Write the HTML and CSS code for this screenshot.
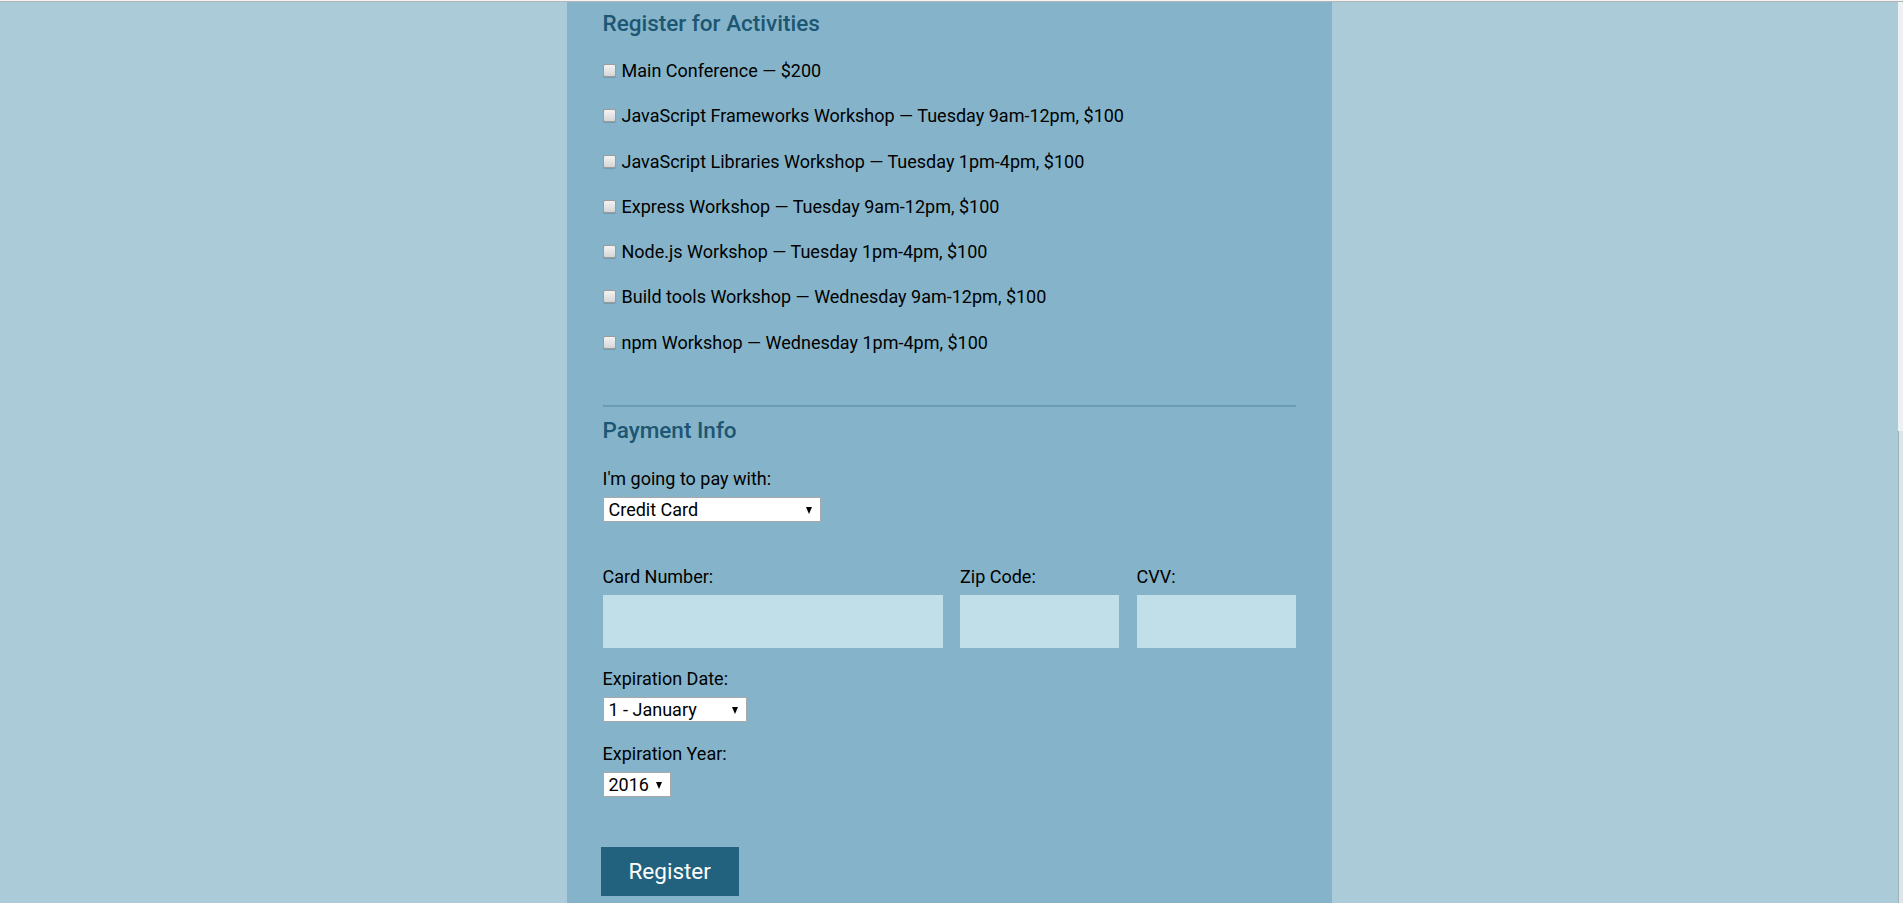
FILE: index.html
```html
<!DOCTYPE html>
<html lang="en">
<head>
<meta charset="utf-8">
<title>Register</title>
<link rel="stylesheet" href="styles.css">
</head>
<body>
<div class="topline"></div>
<div class="frame">
  <div class="page">
    <form class="container">
      <section class="activities">
        <h2 class="legend">Register for Activities</h2>
        <div class="activity-list">
          <label class="activity"><input type="checkbox" class="check">Main Conference — $200</label>
          <label class="activity"><input type="checkbox" class="check">JavaScript Frameworks Workshop — Tuesday 9am-12pm, $100</label>
          <label class="activity"><input type="checkbox" class="check">JavaScript Libraries Workshop — Tuesday 1pm-4pm, $100</label>
          <label class="activity"><input type="checkbox" class="check">Express Workshop — Tuesday 9am-12pm, $100</label>
          <label class="activity"><input type="checkbox" class="check">Node.js Workshop — Tuesday 1pm-4pm, $100</label>
          <label class="activity"><input type="checkbox" class="check">Build tools Workshop — Wednesday 9am-12pm, $100</label>
          <label class="activity"><input type="checkbox" class="check">npm Workshop — Wednesday 1pm-4pm, $100</label>
        </div>
      </section>

      <section class="payment">
        <h2 class="legend">Payment Info</h2>
        <label class="field-label" for="payment">I'm going to pay with:</label>
        <span class="select select-payment">
          <select id="payment">
            <option>Credit Card</option>
            <option>PayPal</option>
            <option>Bitcoin</option>
          </select>
        </span>

        <div class="card-row">
          <div class="card-field">
            <label class="field-label" for="cc-num">Card Number:</label>
            <input class="text-input" id="cc-num" type="text">
          </div>
          <div class="card-field">
            <label class="field-label" for="zip">Zip Code:</label>
            <input class="text-input" id="zip" type="text">
          </div>
          <div class="card-field">
            <label class="field-label" for="cvv">CVV:</label>
            <input class="text-input" id="cvv" type="text">
          </div>
        </div>

        <label class="field-label exp-label" for="exp-month">Expiration Date:</label>
        <span class="select select-month">
          <select id="exp-month">
            <option>1 - January</option>
            <option>2 - February</option>
          </select>
        </span>

        <label class="field-label exp-label" for="exp-year">Expiration Year:</label>
        <span class="select select-year">
          <select id="exp-year">
            <option>2016</option>
            <option>2017</option>
          </select>
        </span>

        <div class="actions">
          <button type="submit" class="register">Register</button>
        </div>
      </section>
    </form>
  </div>
  <div class="scrollbar"><div class="scroll-thumb"></div></div>
</div>
</body>
</html>
```

FILE: styles.css
```css
html, body {
  margin: 0;
  padding: 0;
  height: 100%;
  overflow: hidden;
}

body {
  background: #abcbd8;
  font-family: Roboto, "Liberation Sans", sans-serif;
  font-size: 18px;
  color: #000;
}

.topline {
  height: 1px;
  background: #f4f4f4;
  border-bottom: 1px solid #b4b4b4;
}

.frame {
  display: flex;
  height: calc(100% - 2px);
}

.page {
  flex: 1;
  min-width: 0;
}

.scrollbar {
  width: 5px;
  background: #eef2f4;
  display: flex;
  flex-direction: column;
}

.scroll-thumb {
  margin-top: 429px;
  flex: 1;
  border-left: 1px solid #9fb3bd;
  background: #dfe6ea;
}

.container {
  box-sizing: border-box;
  width: 765px;
  min-height: 100%;
  margin: 0 auto;
  padding: 8.2px 36px 60px;
  background: #85b4ca;
}

.legend {
  margin: 0;
  font-size: 22.5px;
  font-weight: 500;
  line-height: 26px;
  color: #1d5673;
}

/* Activities */
.activities {
  padding-bottom: 49.4px;
}

.activities .legend {
  margin-bottom: 20.9px;
}

.activity-list {
  display: flex;
  flex-direction: column;
  gap: 18.25px;
}

.activity {
  display: block;
  line-height: 27px;
  white-space: nowrap;
}

.check {
  -webkit-appearance: none;
  appearance: none;
  box-sizing: border-box;
  display: inline-block;
  vertical-align: baseline;
  width: 13px;
  height: 13px;
  margin: 0 6px 0 0;
  border: 1px solid #9c9c9c;
  border-radius: 2px;
  background: linear-gradient(#f3f3f3, #d6d6d6);
  box-shadow: 0 1px 1px rgba(0, 0, 0, 0.15);
}

/* Payment */
.payment {
  border-top: 2px solid #6a9db5;
  padding-top: 10px;
}

.payment .legend {
  margin-bottom: 22.2px;
}

.field-label {
  display: block;
  line-height: 27px;
  margin-bottom: 5.3px;
}

.select {
  position: relative;
  display: block;
  height: 25px;
}

.select::after {
  content: "";
  position: absolute;
  right: 9px;
  top: 9.5px;
  border-left: 3.5px solid transparent;
  border-right: 3.5px solid transparent;
  border-top: 7px solid #000;
  pointer-events: none;
}

.select select {
  -webkit-appearance: none;
  appearance: none;
  box-sizing: border-box;
  width: 100%;
  height: 25px;
  margin: 0;
  padding: 0 0 0 5px;
  border: 1px solid #a9a9a9;
  border-radius: 0;
  background: #fff;
  font-family: Roboto, "Liberation Sans", sans-serif;
  font-size: 18px;
  color: #000;
}

.select-payment { width: 218px; }
.select-month { width: 144px; }
.select-year { width: 68px; }

.card-row {
  display: grid;
  grid-template-columns: 340px 159px 159px;
  column-gap: 17.5px;
  margin-top: 40.1px;
}

.text-input {
  box-sizing: border-box;
  display: block;
  width: 100%;
  height: 53px;
  margin: 0;
  border: none;
  background: #c1dfe9;
  font-family: inherit;
  font-size: 18px;
}

.exp-label {
  margin-top: 17.3px;
}

.exp-label + .select {
  margin-top: 0.4px;
}

.actions {
  margin-top: 49.5px;
}

.register {
  margin: 0 0 0 -2px;
  padding: 11.5px 28px 12px;
  border: none;
  background: #22627e;
  color: #fff;
  font-family: Roboto, "Liberation Sans", sans-serif;
  font-size: 22.5px;
  line-height: normal;
}
```
